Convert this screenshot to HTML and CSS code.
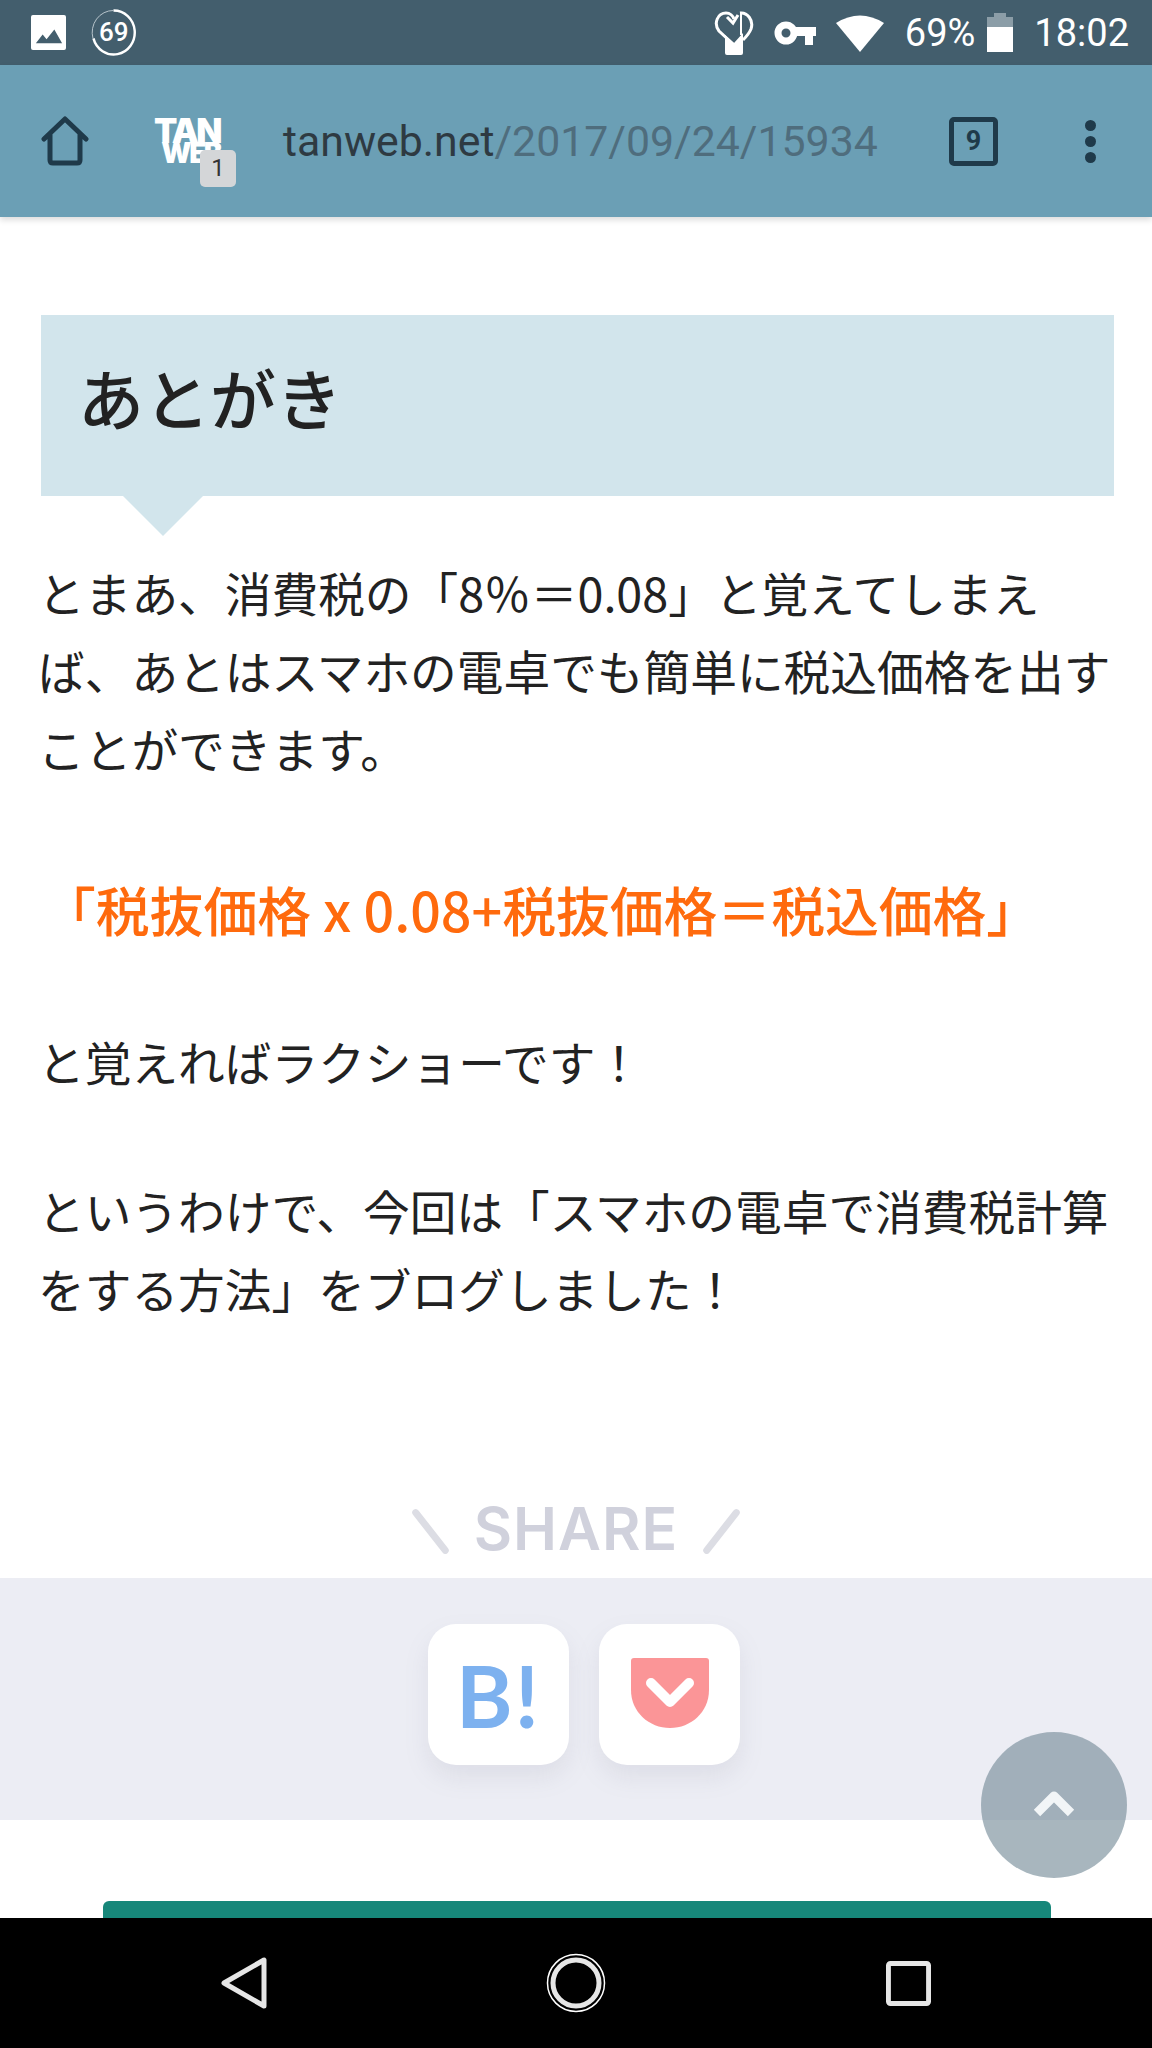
FILE: index.html
```html
<!DOCTYPE html>
<html lang="ja">

<head>
    <meta charset="UTF-8">
    <meta name="viewport" content="width=device-width, initial-scale=1.0">
    <title>あとがき - tanweb.net</title>
    <link rel="stylesheet" href="styles.css">
</head>

<body>
    <div class="phone">
        <div class="status-bar">
            <svg class="ic-picture" viewBox="0 0 36 36">
                <rect x="0" y="0" width="36" height="36" rx="2" fill="#fff" />
                <path d="M5 29 L12 20 L16 25 L24 15 L32 29 Z" fill="#435e6d" />
            </svg>
            <svg class="ic-ring" viewBox="0 0 46 48">
                <path d="M23 1.5 A21.5 22.5 0 1 1 2.5 30" fill="none" stroke="#fff" stroke-width="2.5" />
                <path d="M2 30 A21.5 22.5 0 0 1 23 1.5" fill="none" stroke="#b9c6cd" stroke-width="1" />
            </svg>
            <span class="ring-num">69</span>
            <div class="status-right">
                <svg class="ic-heart" viewBox="0 0 40 44">
                    <path d="M19 33 L5 20 C-1 12 4 2 12 2 C16 2 19 5 20 8 M26 2 C33 1 40 9 37 18 C35 23 32 26 29 29" fill="none" stroke="#fff" stroke-width="3" />
                    <path d="M11 24 L20 32 L29 22 V42 Q29 44 27 44 H13 Q11 44 11 42 Z" fill="#fff" />
                    <path d="M27 1 V24" stroke="#fff" stroke-width="2" />
                    <path d="M13 6 L19 12 L24 4" fill="none" stroke="#fff" stroke-width="3" />
                </svg>
                <svg class="ic-key" viewBox="0 0 42 24">
                    <circle cx="12" cy="12" r="8" fill="none" stroke="#fff" stroke-width="7" />
                    <path d="M20 6 H42 V15 H39 V24 H31 V15 H20 Z" fill="#fff" />
                </svg>
                <svg class="ic-wifi" viewBox="0 0 48 38">
                    <path d="M24 38 L0 9 Q24 -6 48 9 Z" fill="#fff" />
                </svg>
                <span class="status-text">69%</span>
                <svg class="ic-battery" viewBox="0 0 26 39">
                    <path d="M0 39 V4 H7 V0 H19 V4 H26 V39 Z" fill="#8b9da7" />
                    <rect x="0" y="14" width="26" height="25" fill="#fff" />
                </svg>
                <span class="status-text clock">18:02</span>
            </div>
        </div>

        <header class="toolbar">
            <svg class="ic-home" viewBox="0 0 48 50">
                <path d="M3 23 L24 3 L45 23 M9 18 V44 Q9 47 12 47 H36 Q39 47 39 44 V18" fill="none" stroke="#1f3a4a" stroke-width="5" stroke-linejoin="round" stroke-linecap="round" />
            </svg>
            <div class="site-logo">
                <span class="logo-line">TAN</span>
                <span class="logo-line logo-web">WEB</span>
                <span class="logo-badge">1</span>
            </div>
            <div class="url"><span class="url-host">tanweb.net</span>/2017/09/24/15934</div>
            <div class="tab-count">9</div>
            <div class="more-dots"><i></i><i></i><i></i></div>
        </header>

        <main class="content">
            <article class="post">
                <h2 class="post-heading">あとがき</h2>
                <p class="para first">とまあ、消費税の「8％＝0.08」と覚えてしまえば、あとはスマホの電卓でも簡単に税込価格を出すことができます。</p>
                <p class="para formula">「税抜価格 x 0.08+税抜価格＝税込価格」</p>
                <p class="para">と覚えればラクショーです！</p>
                <p class="para">というわけで、今回は「スマホの電卓で消費税計算をする方法」をブログしました！</p>
            </article>

            <div class="share-title"><i class="slash left"></i><span>SHARE</span><i class="slash right"></i></div>
            <div class="share-band">
                <a class="share-btn hatena">B!</a>
                <a class="share-btn">
                    <svg class="ic-pocket" viewBox="0 0 78 70">
                        <path d="M3 0 H75 Q78 0 78 3 V32 C78 54 60 70 39 70 C18 70 0 54 0 32 V3 Q0 0 3 0 Z" fill="#fb9597" />
                        <path d="M20 25 L39 44 L58 25" fill="none" stroke="#fff" stroke-width="10" stroke-linecap="round" stroke-linejoin="round" />
                    </svg>
                </a>
            </div>
            <div class="green-bar"></div>
        </main>

        <a class="to-top">
            <svg viewBox="0 0 44 28">
                <path d="M5 23 L22 6 L39 23" fill="none" stroke="#f2f5f7" stroke-width="9" stroke-linejoin="round" />
            </svg>
        </a>

        <nav class="nav-bar">
            <svg class="ic-back" viewBox="0 0 46 52">
                <path d="M43 3 V49 L3 26 Z" fill="none" stroke="#e6e6e6" stroke-width="5" stroke-linejoin="round" />
            </svg>
            <svg class="ic-circle" viewBox="0 0 60 60">
                <circle cx="30" cy="30" r="28.5" fill="none" stroke="#fff" stroke-width="1.5" />
                <circle cx="30" cy="30" r="23" fill="none" stroke="#e6e6e6" stroke-width="5" />
            </svg>
            <svg class="ic-square" viewBox="0 0 46 46">
                <rect x="2.5" y="2.5" width="41" height="41" rx="2" fill="none" stroke="#e6e6e6" stroke-width="5" />
            </svg>
        </nav>
    </div>
</body>

</html>
```

FILE: styles.css
```css
* {
    box-sizing: border-box;
}

body {
    margin: 0;
    padding: 0;
    background-color: #fff;
    font-family: "Noto Sans CJK JP", "Noto Sans", sans-serif;
}

.phone {
    position: relative;
    width: 1152px;
    height: 2048px;
    display: flex;
    flex-direction: column;
    overflow: hidden;
}

/* status bar */
.status-bar {
    position: relative;
    height: 65px;
    flex: none;
    display: flex;
    align-items: center;
    padding: 0 23px 0 31px;
    background-color: #435e6d;
    color: #fff;
}

.ic-picture {
    width: 35px;
    height: 35px;
}

.ic-ring {
    width: 45px;
    height: 47px;
    margin-left: 25px;
}

.ring-num {
    position: absolute;
    left: 99px;
    top: 12px;
    width: 28px;
    font-family: Roboto, sans-serif;
    font-size: 26px;
    font-weight: 500;
    line-height: 40px;
    text-align: center;
}

.status-right {
    margin-left: auto;
    display: flex;
    align-items: center;
}

.ic-heart {
    width: 40px;
    height: 44px;
}

.ic-key {
    width: 42px;
    height: 24px;
    margin-left: 20px;
}

.ic-wifi {
    width: 48px;
    height: 38px;
    margin-left: 20px;
}

.status-text {
    margin-left: 21px;
    font-family: Roboto, sans-serif;
    font-size: 38px;
    line-height: 44px;
}

.ic-battery {
    width: 26px;
    height: 39px;
    margin-left: 12px;
}

.clock {
    margin-left: 21px;
}

/* browser toolbar */
.toolbar {
    height: 152px;
    flex: none;
    display: flex;
    align-items: center;
    background-color: #6b9fb5;
    box-shadow: 0 3px 6px rgba(0, 0, 0, 0.14);
    z-index: 2;
}

.ic-home {
    width: 48px;
    height: 50px;
    margin-left: 41px;
    flex: none;
}

.site-logo {
    position: relative;
    width: 69px;
    height: 46px;
    margin-left: 62px;
    margin-right: 2px;
    flex: none;
    color: #fff;
    font-family: Inter, sans-serif;
    font-weight: 900;
    text-align: right;
}

.logo-line {
    display: block;
    font-size: 34px;
    line-height: 25px;
    letter-spacing: -2.5px;
}

.logo-web {
    font-size: 28px;
    line-height: 21px;
    letter-spacing: -2.5px;
}

.logo-badge {
    position: absolute;
    left: 49px;
    top: 32px;
    width: 36px;
    height: 37px;
    border-radius: 5px;
    background-color: #d4d6d8;
    color: #333;
    font-family: Roboto, sans-serif;
    font-size: 24px;
    font-weight: 400;
    letter-spacing: 0;
    line-height: 37px;
    text-align: center;
}

.url {
    flex: 1;
    margin-left: 61px;
    font-family: Roboto, sans-serif;
    font-size: 42.8px;
    line-height: 50px;
    color: #4f6d7d;
    white-space: nowrap;
}

.url-host {
    color: #2e3a42;
}

.tab-count {
    width: 49px;
    height: 49px;
    flex: none;
    border: 5px solid #1f3a4a;
    border-radius: 5px;
    color: #1f3a4a;
    font-family: "Liberation Sans Narrow", Roboto, sans-serif;
    font-size: 27px;
    font-weight: 700;
    line-height: 38px;
    text-align: center;
}

.more-dots {
    margin-left: 87px;
    margin-right: 56px;
    display: flex;
    flex-direction: column;
    gap: 5px;
}

.more-dots i {
    display: block;
    width: 11px;
    height: 11px;
    border-radius: 50%;
    background-color: #1f3a4a;
}

/* article */
.content {
    flex: 1;
    min-height: 0;
    overflow: hidden;
    padding-top: 98px;
}

.post {
    margin: 0 38px 0 41px;
    color: #222;
}

.post-heading {
    position: relative;
    height: 181px;
    margin: 0 0 57px;
    padding: 40px 37px 0;
    background-color: #d2e5ec;
    font-size: 66px;
    font-weight: 500;
    line-height: 82px;
}

.post-heading::after {
    content: "";
    position: absolute;
    left: 82px;
    top: 100%;
    border-top: 40px solid #d2e5ec;
    border-left: 40px solid transparent;
    border-right: 40px solid transparent;
}

.para {
    margin: 0 -5px 71px -3px;
    font-size: 46.7px;
    line-height: 78px;
}

.para.first {
    margin-bottom: 77px;
}

.formula {
    color: #ff6a0d;
    font-weight: 500;
    margin-bottom: 68px;
    padding-left: 4px;
    font-size: 53.8px;
    line-height: 90px;
}

.share-title {
    height: 55px;
    margin-top: 174px;
    display: flex;
    justify-content: center;
    align-items: center;
    gap: 40px;
    color: #d0d1dc;
    font-family: Inter, sans-serif;
    font-size: 59px;
    font-weight: 600;
    letter-spacing: 1px;
    line-height: 55px;
}

.slash {
    display: block;
    width: 7px;
    height: 55px;
    margin-top: 6px;
    border-radius: 4px;
    background-color: #dcdde4;
}

.slash.left {
    transform: rotate(-38deg);
}

.slash.right {
    transform: rotate(38deg);
}

.share-band {
    height: 242px;
    margin-top: 22px;
    padding-top: 46px;
    padding-left: 16px;
    display: flex;
    justify-content: center;
    gap: 30px;
    background-color: #ecedf4;
}

.share-btn {
    width: 141px;
    height: 141px;
    display: flex;
    align-items: center;
    justify-content: center;
    border-radius: 28px;
    background-color: #fff;
    box-shadow: 0 12px 24px rgba(120, 125, 150, 0.13);
}

.hatena {
    color: #7db1ef;
    font-family: Lato, sans-serif;
    font-size: 86px;
    font-weight: 700;
    letter-spacing: 2px;
}

.ic-pocket {
    width: 78px;
    height: 70px;
    margin-bottom: 3px;
}

.green-bar {
    height: 30px;
    margin: 81px 101px 0 103px;
    border-radius: 6px 6px 0 0;
    background-color: #17877a;
}

/* floating button */
.to-top {
    position: absolute;
    left: 981px;
    top: 1732px;
    width: 146px;
    height: 146px;
    display: flex;
    align-items: center;
    justify-content: center;
    border-radius: 50%;
    background-color: rgba(114, 137, 150, 0.62);
    z-index: 3;
}

.to-top svg {
    width: 44px;
    height: 28px;
    margin-bottom: 2px;
}

/* android navigation */
.nav-bar {
    height: 130px;
    flex: none;
    display: flex;
    align-items: center;
    background-color: #000;
}

.ic-back {
    width: 46px;
    height: 52px;
    margin-left: 221px;
}

.ic-circle {
    width: 60px;
    height: 60px;
    margin-left: 279px;
}

.ic-square {
    width: 45px;
    height: 45px;
    margin-left: 280px;
}
```
